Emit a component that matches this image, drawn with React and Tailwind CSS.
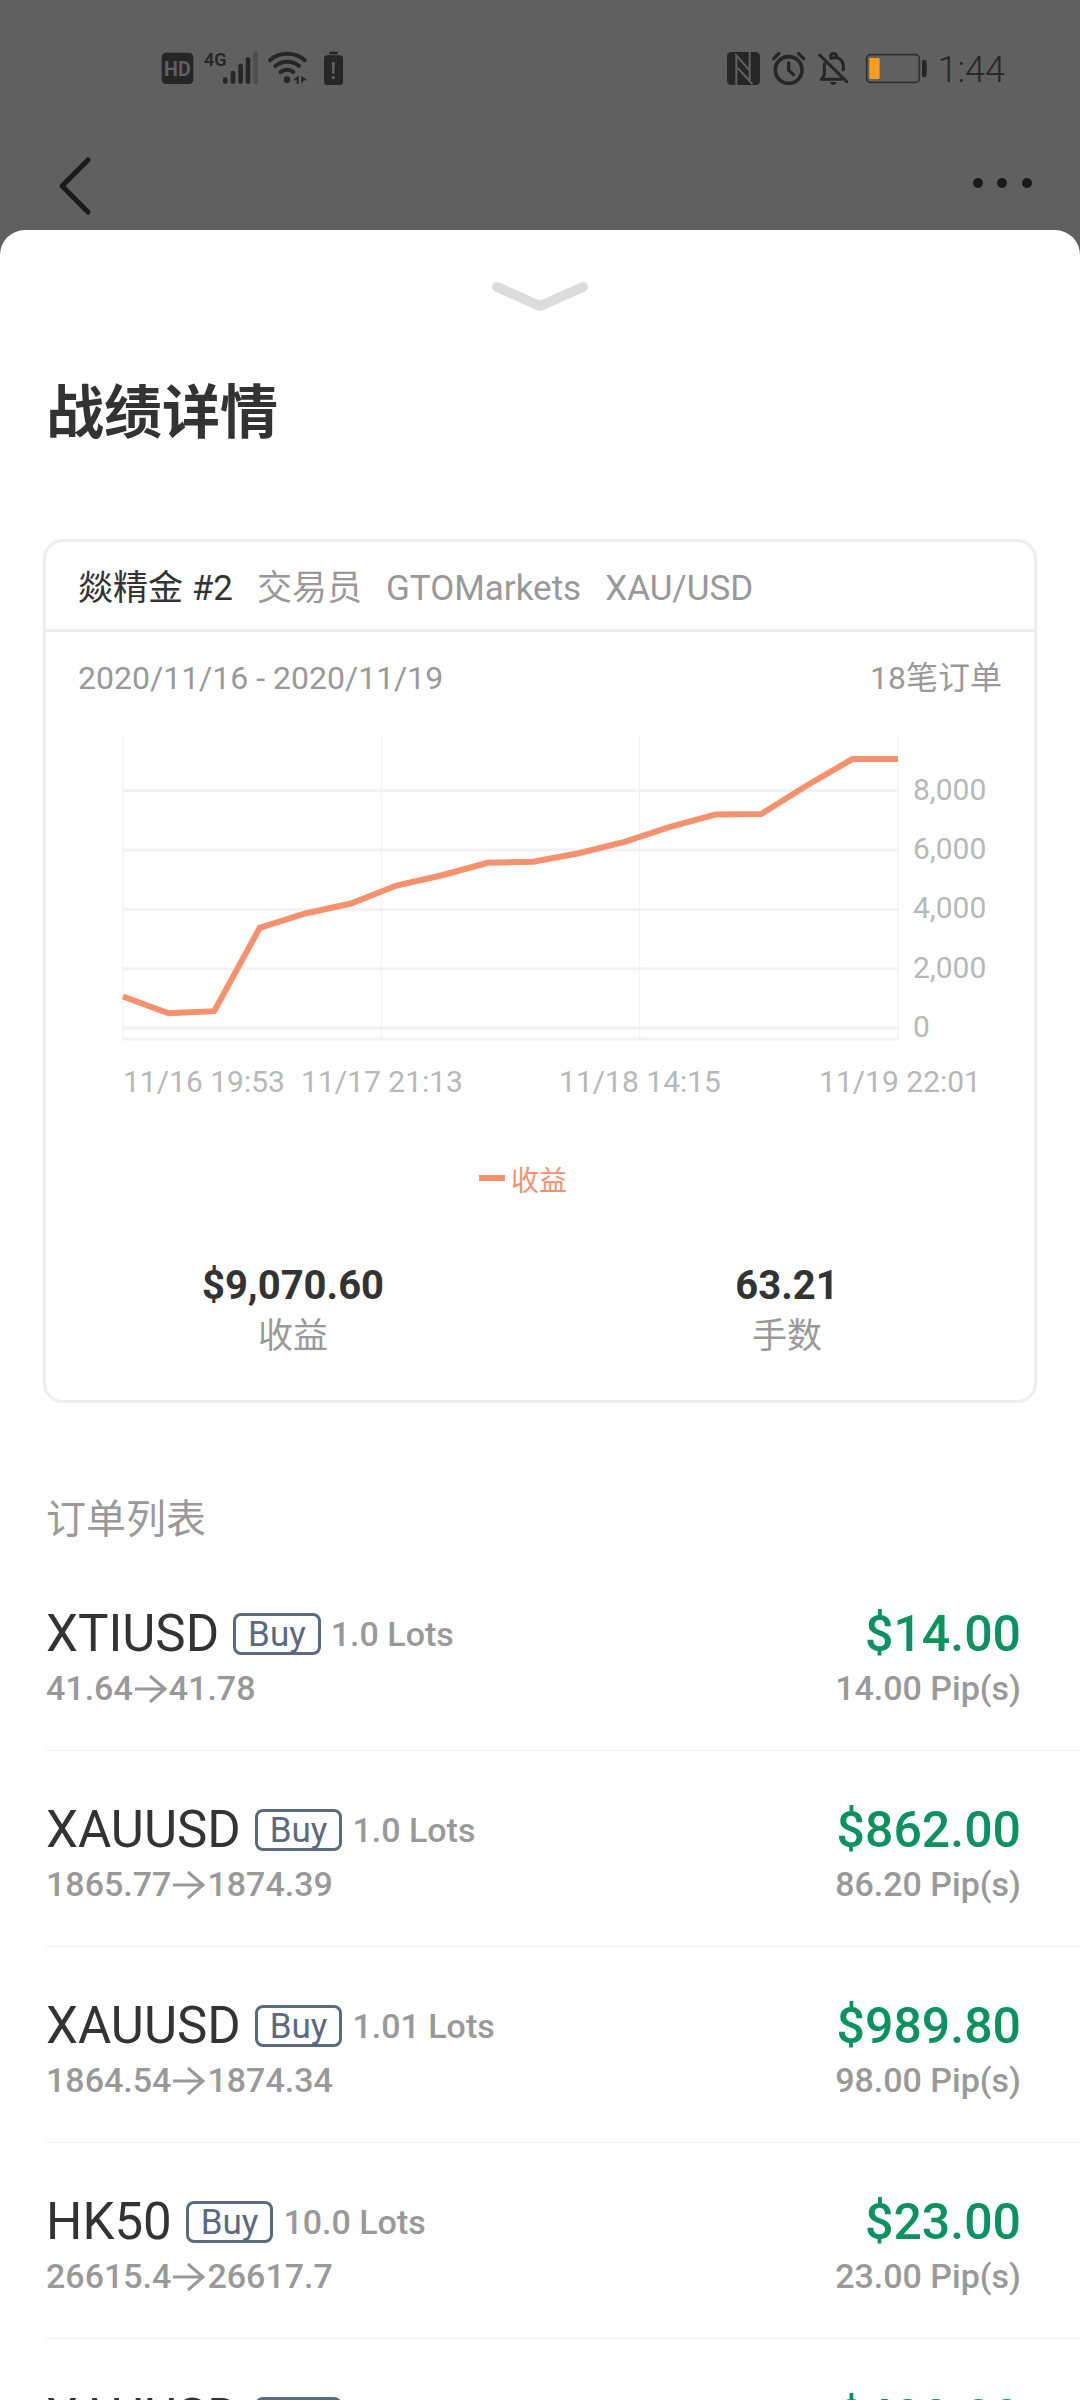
import React from "react";

const profits = [
  1062, 499, 567, 3379, 3862, 4199, 4806, 5153, 5572, 5605, 5895, 6280, 6786,
  7200, 7217, 8179, 9070, 9070.6,
];

const yTicks = [
  { value: 8000, label: "8,000" },
  { value: 6000, label: "6,000" },
  { value: 4000, label: "4,000" },
  { value: 2000, label: "2,000" },
  { value: 0, label: "0" },
];

const orders = [
  { symbol: "XTIUSD", lots: "1.0", open: "41.64", close: "41.78", profit: "$14.00", pips: "14.00" },
  { symbol: "XAUUSD", lots: "1.0", open: "1865.77", close: "1874.39", profit: "$862.00", pips: "86.20" },
  { symbol: "XAUUSD", lots: "1.01", open: "1864.54", close: "1874.34", profit: "$989.80", pips: "98.00" },
  { symbol: "HK50", lots: "10.0", open: "26615.4", close: "26617.7", profit: "$23.00", pips: "23.00" },
  { symbol: "XAUUSD", lots: "1.0", open: "1865.10", close: "1869.98", profit: "$488.00", pips: "48.80" },
];

const StatusBar = () => (
  <div className="flex h-[136px] items-center justify-between pl-40 pr-[75px] text-[#262626]">
    <div className="flex items-center">
      {/* HD */}
      <svg className="h-9 w-[35px]" viewBox="60 60 105 108">
        <rect x="65" y="68" width="95" height="94" rx="13" fill="currentColor" />
        <text x="112" y="137" textAnchor="middle" fontSize="59" fontWeight="700" fill="#606060">
          HD
        </text>
      </svg>
      {/* 4G signal */}
      <svg className="ml-[9px] h-9 w-[55px]" viewBox="192 60 165 108">
        <text x="192" y="107" fontSize="54" fontWeight="600" fill="currentColor">
          4G
        </text>
        <g stroke="currentColor" strokeWidth="14" strokeLinecap="round">
          <path d="M256 149v6" />
          <path d="M279 129v26" />
          <path d="M302 108v47" />
          <path d="M324 88v67" />
          <path d="M347 70v85" stroke="#4f4f4f" />
        </g>
      </svg>
      {/* Wifi */}
      <svg className="ml-2 h-9 w-[41px]" viewBox="381 60 123 108">
        <g fill="none" stroke="currentColor" strokeWidth="12" strokeLinecap="round">
          <path d="M390 91c28-26 76-26 104 0" />
          <path d="M406 108c20-17 52-17 71 0" />
          <path d="M422 126c11-9 28-9 38 0" />
        </g>
        <circle cx="441" cy="149" r="10" fill="currentColor" />
        <path d="M459 151l17-15v26h-6v-11zM484 137l18 14h-10l-8 11z" fill="currentColor" />
      </svg>
      {/* Battery warning */}
      <svg className="ml-[15px] h-9 w-[22px]" viewBox="549 60 66 108">
        <path d="M568 65h25v8h-25z" fill="currentColor" />
        <rect x="552" y="76" width="57" height="89" rx="10" fill="currentColor" />
        <path d="M575 97h10l-2 35h-6z" fill="#606060" />
        <circle cx="580" cy="143" r="5" fill="#606060" />
      </svg>
    </div>
    <div className="flex items-center">
      {/* NFC */}
      <svg className="h-9 w-[35px]" viewBox="75 60 105 108">
        <rect x="78" y="66" width="99" height="99" rx="13" fill="currentColor" />
        <path d="M106 165V76l40 46M146 66v84M110 114l44 48" fill="none" stroke="#606060" strokeWidth="6" />
      </svg>
      {/* Alarm */}
      <svg className="ml-[10px] h-9 w-[35px]" viewBox="210 60 105 108">
        <g fill="none" stroke="currentColor" strokeLinecap="round" strokeLinejoin="round">
          <circle cx="263" cy="120" r="40" strokeWidth="11" />
          <path d="M263 99v22l15 13" strokeWidth="10" />
          <path d="M218 86l15-15M308 86l-15-15" strokeWidth="10" />
        </g>
      </svg>
      {/* Muted bell */}
      <svg className="ml-3 h-9 w-[31px]" viewBox="351 60 93 108">
        <g fill="none" stroke="currentColor" strokeWidth="9" strokeLinecap="round" strokeLinejoin="round">
          <path d="M356 75l81 80" />
          <path d="M389 80c0-13 18-13 18 0" />
          <path d="M390 85c22-9 37 6 37 26v8" />
          <path d="M370 102v33l-9 13h60" />
        </g>
        <path d="M387 156h20c-4 12-16 12-20 0z" fill="currentColor" />
      </svg>
      {/* Battery level */}
      <svg className="ml-4 h-9 w-[63px]" viewBox="492 60 189 108">
        <rect x="497" y="74" width="158" height="83" rx="11" fill="none" stroke="#303030" strokeWidth="5" />
        <rect x="505" y="84" width="31" height="63" rx="4" fill="#ff9c19" />
        <rect x="663" y="89" width="14" height="53" rx="7" fill="currentColor" />
      </svg>
      <span className="ml-[10px] pt-1 text-[36px] font-light leading-10">1:44</span>
    </div>
  </div>
);

const NavBar = () => (
  <div className="flex h-[94px] items-center justify-between pl-14 pr-[47px] text-[#1a1a1a]">
    <button type="button" aria-label="返回">
      <svg className="h-[66px] w-9" viewBox="0 0 36 66">
        <path
          d="M32 10L6 36l26 26"
          fill="none"
          stroke="currentColor"
          strokeWidth="5"
          strokeLinecap="round"
          strokeLinejoin="round"
        />
      </svg>
    </button>
    <button type="button" aria-label="更多">
      <svg className="h-3 w-[60px]" viewBox="0 0 60 12" fill="currentColor">
        <circle cx="5" cy="6" r="5" />
        <circle cx="29" cy="6" r="5" />
        <circle cx="54" cy="6" r="5" />
      </svg>
    </button>
  </div>
);

const ProfitChart = () => {
  const left = 77;
  const right = 852;
  const toY = (value) => 330 - value * 0.02965;
  const step = (right - left) / (profits.length - 1);
  const points = profits.map((value, i) => `${left + i * step},${toY(value)}`).join(" ");

  return (
    <svg className="block w-full" viewBox="0 0 988 412">
      {/* Grid */}
      <g stroke="#f2f2f2" strokeWidth="3">
        {yTicks.map((tick) => (
          <line key={tick.value} x1={left} x2={right} y1={toY(tick.value)} y2={toY(tick.value)} />
        ))}
        <line x1={left} x2={right} y1="341" y2="341" />
      </g>
      <g stroke="#f0f0f0" strokeWidth="1">
        {[0, 1, 2, 3].map((i) => {
          const x = left + ((right - left) / 3) * i;
          return <line key={i} x1={x} x2={x} y1="36" y2="342" />;
        })}
      </g>
      <polyline points={points} fill="none" stroke="#f6916e" strokeWidth="6" />
      {/* Axis labels */}
      <g fontSize="30" fill="#b8b8b8">
        {yTicks.map((tick) => (
          <text key={tick.value} x="867" y={toY(tick.value) + 9}>
            {tick.label}
          </text>
        ))}
        <text x="77" y="394">11/16 19:53</text>
        <text x="336" y="394" textAnchor="middle">11/17 21:13</text>
        <text x="594" y="394" textAnchor="middle">11/18 14:15</text>
        <text x="854" y="394" textAnchor="middle">11/19 22:01</text>
      </g>
    </svg>
  );
};

const Stat = ({ value, label }) => (
  <div className="flex flex-1 flex-col items-center gap-[5px]">
    <strong className="text-[40px] font-bold leading-[48px] text-[#333]">{value}</strong>
    <span className="text-[35px] leading-[44px] text-[#999]">{label}</span>
  </div>
);

const SummaryCard = () => (
  <section className="mx-[43px] rounded-[20px] border-[3px] border-[#eee]">
    <div className="flex gap-6 border-b-[3px] border-[#eee] px-8 pb-5 pt-[27px] text-[35px] leading-10 text-[#999]">
      <span className="text-[#333]">燚精金 #2</span>
      <span>交易员</span>
      <span>GTOMarkets</span>
      <span>XAU/USD</span>
    </div>
    <div className="flex justify-between px-8 pt-[26px] text-[32px] leading-10 text-[#999]">
      <span>2020/11/16 - 2020/11/19</span>
      <span>18笔订单</span>
    </div>
    <ProfitChart />
    <div className="flex items-start justify-center gap-[6px] pr-[34px] pt-[52px] text-[28px] leading-10 text-[#f6916e]">
      <span className="mt-[13px] h-[6px] w-[26px] bg-[#f6916e]" />
      收益
    </div>
    <div className="flex pb-[41px] pt-[60px]">
      <Stat value="$9,070.60" label="收益" />
      <Stat value="63.21" label="手数" />
    </div>
  </section>
);

const Arrow = () => (
  <svg className="mx-px h-[30px] w-[34px]" viewBox="0 0 34 30">
    <path d="M1 16h30M16 3l15 13-15 13" fill="none" stroke="currentColor" strokeWidth="3" />
  </svg>
);

const OrderRow = ({ order }) => (
  <li className="ml-[46px] flex justify-between border-b border-[#f0f0f0] pb-[42px] pr-[59px] pt-[49px] text-[#999]">
    <div className="flex flex-col gap-1">
      <div className="flex items-center">
        <span className="text-[51px] leading-[60px] text-[#333]">{order.symbol}</span>
        <span className="ml-[14px] flex h-[42px] items-center rounded-lg border-[3px] border-[#5c6a80] px-3 pt-[2px] text-[35px] text-[#5c6a80]">
          Buy
        </span>
        <span className="ml-[10px] text-[34px] font-medium leading-10">{order.lots} Lots</span>
      </div>
      <div className="flex items-center text-[34px] font-medium leading-10">
        {order.open}
        <Arrow />
        {order.close}
      </div>
    </div>
    <div className="flex flex-col items-end gap-1">
      <span className="text-[50px] font-medium leading-[60px] text-[#0b925f]">{order.profit}</span>
      <span className="text-[34px] font-medium leading-10">{order.pips} Pip(s)</span>
    </div>
  </li>
);

const App = () => {
  return (
    <div className="flex h-screen flex-col overflow-hidden bg-[#606060] font-['Roboto','Noto_Sans_CJK_SC',sans-serif]">
      <StatusBar />
      <NavBar />
      <main className="flex-1 overflow-hidden rounded-t-[25px] bg-white">
        <button type="button" aria-label="收起" className="mx-auto mt-[50px] block">
          <svg className="block h-[34px] w-[100px]" viewBox="0 0 100 34">
            <path
              d="M7 7l43 19 43-19"
              fill="none"
              stroke="#dcdcdc"
              strokeWidth="10"
              strokeLinecap="round"
              strokeLinejoin="round"
            />
          </svg>
        </button>
        <h1 className="mb-[90px] mt-[63px] px-[46px] text-[58px] font-bold leading-[72px] text-[#333]">
          战绩详情
        </h1>
        <SummaryCard />
        <h2 className="mb-[11px] mt-[93px] px-[46px] text-[40px] leading-[48px] text-[#999]">
          订单列表
        </h2>
        <ul>
          {orders.map((order, i) => (
            <OrderRow key={i} order={order} />
          ))}
        </ul>
      </main>
    </div>
  );
};

export default App;
